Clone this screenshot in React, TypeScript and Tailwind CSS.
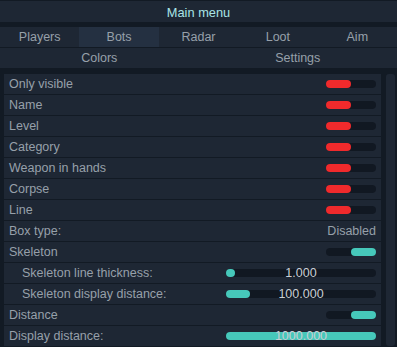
import React from "react";

type Row =
  | { label: string; kind: "toggle"; on: boolean; indent?: boolean }
  | { label: string; kind: "text"; value: string; indent?: boolean }
  | { label: string; kind: "slider"; value: string; fill: number; indent?: boolean };

const rows: Row[] = [
  { label: "Only visible", kind: "toggle", on: false },
  { label: "Name", kind: "toggle", on: false },
  { label: "Level", kind: "toggle", on: false },
  { label: "Category", kind: "toggle", on: false },
  { label: "Weapon in hands", kind: "toggle", on: false },
  { label: "Corpse", kind: "toggle", on: false },
  { label: "Line", kind: "toggle", on: false },
  { label: "Box type:", kind: "text", value: "Disabled" },
  { label: "Skeleton", kind: "toggle", on: true },
  { label: "Skeleton line thickness:", kind: "slider", value: "1.000", fill: 9, indent: true },
  { label: "Skeleton display distance:", kind: "slider", value: "100.000", fill: 24, indent: true },
  { label: "Distance", kind: "toggle", on: true },
  { label: "Display distance:", kind: "slider", value: "1000.000", fill: 150 },
];

function Toggle({ on }: { on: boolean }) {
  return (
    <div className={`w-[50px] h-[8px] rounded-full bg-[#111822] flex ${on ? "justify-end" : "justify-start"}`}>
      <div className={`w-[25px] h-[8px] rounded-full ${on ? "bg-[#46c8ba]" : "bg-[#f02a2c]"}`} />
    </div>
  );
}

function Slider({ value, fill }: { value: string; fill: number }) {
  return (
    <div className="relative w-[150px] h-[8px] rounded-full bg-[#111822]">
      <div className="h-[8px] rounded-full bg-[#46c8ba]" style={{ width: fill }} />
      <span className="absolute inset-0 flex items-center justify-center text-[12.5px] leading-none text-[#c9ced4]">
        {value}
      </span>
    </div>
  );
}

export default function App() {
  const tabs = ["Players", "Bots", "Radar", "Loot", "Aim"];
  return (
    <div
      className="w-[397px] h-[347px] overflow-hidden bg-[#121a24] text-[12.5px] text-[#97a0aa]"
      style={{ fontFamily: '"Liberation Sans", Arial, sans-serif' }}
    >
      <div className="h-[21px] mt-[1px] pt-[2px] bg-[#1e2734] flex items-center justify-center text-[12.8px] text-[#a9e4e6]">
        Main menu
      </div>
      <div className="h-[5px]" />
      <div className="grid grid-cols-5 h-[20px] bg-[#1e2734]">
        {tabs.map((t) => (
          <div key={t} className={`flex items-center justify-center ${t === "Bots" ? "bg-[#243041]" : ""}`}>
            {t}
          </div>
        ))}
      </div>
      <div className="h-[1px]" />
      <div className="grid grid-cols-2 h-[20px] bg-[#1e2734]">
        <div className="flex items-center justify-center">Colors</div>
        <div className="flex items-center justify-center">Settings</div>
      </div>
      <div className="h-[6px]" />
      <div className="flex">
        <div className="ml-[4px] w-[377px] flex flex-col gap-[1px]">
          {rows.map((r) => (
            <div
              key={r.label}
              className={`h-[20px] bg-[#1e2734] flex items-center justify-between pr-[5px] ${r.indent ? "pl-[18px]" : "pl-[5px]"}`}
            >
              <span>{r.label}</span>
              {r.kind === "toggle" && <Toggle on={r.on} />}
              {r.kind === "text" && <span>{r.value}</span>}
              {r.kind === "slider" && <Slider value={r.value} fill={r.fill} />}
            </div>
          ))}
        </div>
        <div className="ml-[5px] w-[9px] h-[272px] rounded-[3px] bg-[#1e2734]" />
      </div>
    </div>
  );
}
